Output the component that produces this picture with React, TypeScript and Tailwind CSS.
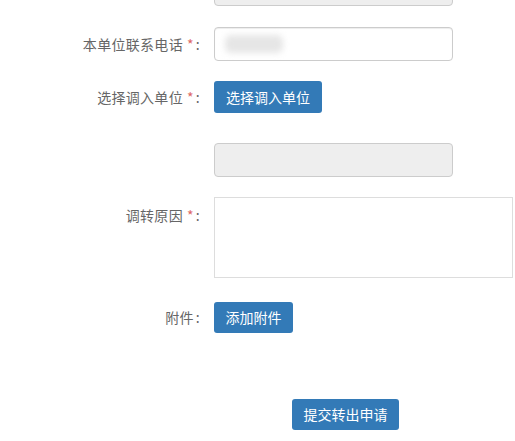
import React from "react";

const font = { fontFamily: '"Microsoft YaHei", "Noto Sans CJK SC", "Noto Sans", sans-serif' };

function Label({ text, required, top }: { text: string; required?: boolean; top?: boolean }) {
  return (
    <div
      className={`w-[200px] shrink-0 text-right text-[14px] tracking-[0.3px] text-[#666] ${top ? "self-start pt-[8px]" : ""}`}
    >
      {text}
      {required && <span className="ml-[4px] text-[#d66]">*</span>}
      <span className="ml-[2px]">:</span>
    </div>
  );
}

export default function App() {
  return (
    <div className="h-[441px] w-[515px] overflow-hidden bg-white" style={font}>
      {/* 上一行被截断的输入框 */}
      <div className="flex">
        <div className="w-[200px] shrink-0" />
        <div className="ml-[14px] -mt-[28px] h-[34px] w-[239px] rounded-[4px] border border-[#ccc] bg-[#eee]" />
      </div>

      <div className="mt-[21px] flex items-center">
        <Label text="本单位联系电话" required />
        <div className="ml-[14px] flex h-[34px] w-[239px] items-center rounded-[4px] border border-[#ccc] bg-white px-[10px] shadow-[inset_0_1px_1px_rgba(0,0,0,0.075)]">
          <div className="h-[18px] w-[58px] rounded-[6px] bg-[#e6e6e6] blur-[3px]" />
        </div>
      </div>

      <div className="mt-[20px] flex items-center">
        <Label text="选择调入单位" required />
        <button className="ml-[14px] h-[32px] w-[108px] rounded-[3px] bg-[#337ab7] text-[14px] text-white">
          选择调入单位
        </button>
      </div>

      <div className="mt-[30px] flex">
        <div className="w-[200px] shrink-0" />
        <div className="ml-[14px] h-[34px] w-[239px] rounded-[4px] border border-[#ccc] bg-[#eee]" />
      </div>

      <div className="mt-[20px] flex">
        <Label text="调转原因" required top />
        <textarea className="ml-[14px] h-[81px] w-[299px] resize-none border border-[#ddd] bg-white outline-none" />
      </div>

      <div className="mt-[24px] flex items-center">
        <Label text="附件" />
        <button className="ml-[14px] h-[31px] w-[79px] rounded-[3px] bg-[#337ab7] text-[14px] text-white">
          添加附件
        </button>
      </div>

      <div className="mt-[66px] pl-[292px]">
        <button className="h-[31px] w-[107px] rounded-[3px] bg-[#337ab7] text-[14px] text-white">
          提交转出申请
        </button>
      </div>
    </div>
  );
}
